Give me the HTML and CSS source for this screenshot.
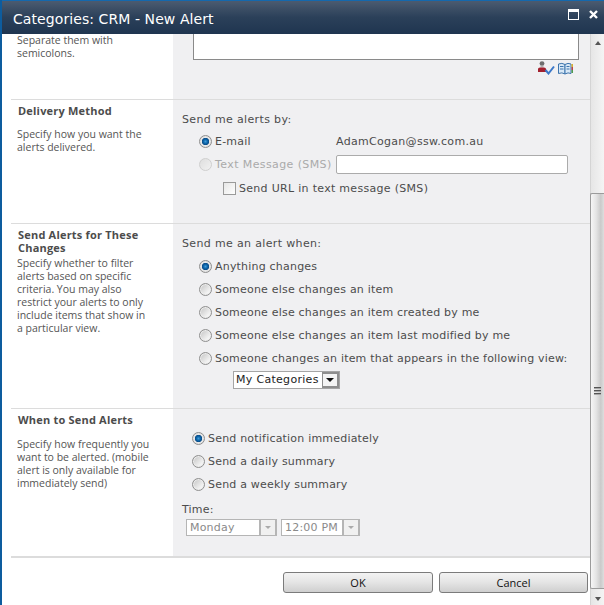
FILE: index.html
```html
<!DOCTYPE html>
<html lang="en">
  <head>
    <meta charset="utf-8">
    <title>Categories: CRM - New Alert</title>
    <link rel="stylesheet" href="styles.css">
  </head>
  <body>
    <div class="dialog">
      <div class="titlebar">
        <span class="title">Categories: CRM - New Alert</span>
        <span class="winbtns">
          <svg width="11" height="11" viewBox="0 0 11 11"><rect x="0.5" y="0.5" width="10" height="10" fill="none" stroke="#fff"/><rect x="1" y="1" width="9" height="2" fill="#fff"/></svg>
          <svg width="9" height="9" viewBox="0 0 9 9"><path d="M1 1l7 7M8 1l-7 7" stroke="#fff" stroke-width="2.4" fill="none"/></svg>
        </span>
      </div>
      <div class="main">
        <div class="content">

          <div class="section sec-users">
            <div class="left">
              <p class="desc">Separate them with semicolons.</p>
            </div>
            <div class="right">
              <div class="addressbox"></div>
              <div class="picker">
                <svg width="17" height="14" viewBox="0 0 17 14">
                  <circle cx="4" cy="2.600" r="2.400" fill="#6e6e6e"/>
                  <rect x="2.500" y="4.500" width="3" height="2" fill="#b5b5b5"/>
                  <path d="M0 11v-3q0-1.500 2-1.500h4q2 0 2 1.500v3z" fill="#a3202e"/>
                  <path d="M7.500 9l3 3.500 5.500-7" stroke="#3b78c9" stroke-width="2" fill="none"/>
                </svg>
                <svg width="15" height="13" viewBox="0 0 15 13">
                  <path d="M0.500 2q3.500-1.500 6.500 0.500v9.500q-3-2-6.500-0.500z" fill="#d8e8f6" stroke="#3d74ad"/>
                  <path d="M7 2.500q3-2 6-0.500v9.500q-3-1.500-6 0.500z" fill="#d8e8f6" stroke="#3d74ad"/>
                  <path d="M2 4.500h3.500M2 7h3.500M8.500 4.500h3M8.500 7h3" stroke="#3d74ad" fill="none"/>
                  <rect x="13.500" y="2" width="1.500" height="3" fill="#d9b02c"/>
                  <rect x="13.500" y="5" width="1.500" height="3" fill="#b8434a"/>
                  <rect x="13.500" y="8" width="1.500" height="3" fill="#4f9a4a"/>
                </svg>
              </div>
            </div>
          </div>

          <div class="section sec-delivery">
            <div class="left">
              <h3>Delivery Method</h3>
              <p class="desc spaced">Specify how you want the alerts delivered.</p>
            </div>
            <div class="right">
              <div class="lead">Send me alerts by:</div>
              <div class="opts indent1">
                <label class="opt"><input type="radio" name="by" checked><span class="optname">E-mail</span><span class="addr">AdamCogan@ssw.com.au</span></label>
                <label class="opt off"><input type="radio" name="by" disabled><span class="optname">Text Message (SMS)</span><span class="smsbox"></span></label>
                <label class="opt chk"><input type="checkbox"><span>Send URL in text message (SMS)</span></label>
              </div>
            </div>
          </div>

          <div class="section sec-changes">
            <div class="left">
              <h3>Send Alerts for These Changes</h3>
              <p class="desc">Specify whether to filter alerts based on specific criteria. You may also restrict your alerts to only include items that show in a particular view.</p>
            </div>
            <div class="right">
              <div class="lead">Send me an alert when:</div>
              <div class="opts indent1">
                <label class="opt"><input type="radio" name="when" checked><span>Anything changes</span></label>
                <label class="opt"><input type="radio" name="when"><span>Someone else changes an item</span></label>
                <label class="opt"><input type="radio" name="when"><span>Someone else changes an item created by me</span></label>
                <label class="opt"><input type="radio" name="when"><span>Someone else changes an item last modified by me</span></label>
                <label class="opt"><input type="radio" name="when"><span>Someone changes an item that appears in the following view:</span></label>
              </div>
              <div class="viewselect">
                <span class="viewname">My Categories</span>
                <span class="viewarrow"><i></i></span>
              </div>
            </div>
          </div>

          <div class="section sec-when">
            <div class="left">
              <h3>When to Send Alerts</h3>
              <p class="desc spaced">Specify how frequently you want to be alerted. (mobile alert is only available for immediately send)</p>
            </div>
            <div class="right">
              <div class="opts indent2">
                <label class="opt"><input type="radio" name="freq" checked><span>Send notification immediately</span></label>
                <label class="opt"><input type="radio" name="freq"><span>Send a daily summary</span></label>
                <label class="opt"><input type="radio" name="freq"><span>Send a weekly summary</span></label>
              </div>
              <div class="timelabel">Time:</div>
              <div class="timerow">
                <div class="dis-select day"><span>Monday</span><b><i></i></b></div>
                <div class="dis-select hour"><span>12:00 PM</span><b><i></i></b></div>
              </div>
            </div>
          </div>

          <div class="buttons">
            <button class="btn ok" type="button">OK</button>
            <button class="btn" type="button">Cancel</button>
          </div>
        </div>

        <div class="scrollbar">
          <span class="arrow up"></span>
          <div class="track">
            <div class="thumb"><span class="grip"></span></div>
          </div>
          <span class="arrow down"></span>
        </div>
      </div>
    </div>
  </body>
</html>
```

FILE: styles.css
```css
* {margin: 0; padding: 0; box-sizing: border-box;}

html, body {
	width: 604px;
	height: 605px;
	overflow: hidden;
	background: #fff;
}
body {
	font: 11px "DejaVu Sans", Verdana, sans-serif;
	color: #4c4c4c;
}

.dialog {
	display: flex;
	flex-direction: column;
	height: 605px;
	border-left: 2px solid #0d5c9e;
}

/* title bar */
.titlebar {
	display: flex;
	justify-content: space-between;
	align-items: center;
	height: 34px;
	padding: 0 6px 0 11px;
	border-top: 1px solid #1468ad;
	background: linear-gradient(#4b5b70, #2b4059 50%, #1f3550);
	color: #fff;
}
.title {font-size: 14px; letter-spacing: 0.08px; position: relative; top: 1px;}
.winbtns {display: flex; align-items: center; gap: 10px; margin-bottom: 7px;}

.main {display: flex; flex: 1; min-height: 0;}
.content {flex: 1; padding-left: 9px;}

/* sections */
.section {
	display: grid;
	grid-template-columns: 162px 1fr;
	border-bottom: 1px solid #dcdcdc;
}
.sec-users {height: 66px;}
.sec-delivery {height: 124px;}
.sec-changes {height: 185px;}
.sec-when {height: 149px; border-bottom: 2px solid #dcdcdc;}

.left {padding: 4px 0 0 6px; font-family: "Open Sans", sans-serif; line-height: 13px; color: #555;}
.right {background: #f0f0f2; padding-left: 9px; letter-spacing: 0.2px;}

h3 {
	font: bold 11px/13px "Open Sans", sans-serif;
	letter-spacing: 0.2px;
	color: #4c4c4c;
	padding: 0 10px 0 1px;
}
.desc {font-size: 10.500px; width: 135px;}
.spaced {margin-top: 11px;}
.sec-users .left {padding-top: 0;}
.sec-when .spaced {margin-top: 12px;}
.sec-changes .desc {margin-top: 3px;}

.lead {height: 14px; line-height: 14px; letter-spacing: 0.35px;}
.sec-delivery .right {padding-top: 13px;}
.sec-changes .right {padding-top: 13px;}
.sec-when .right {padding-top: 18px;}

/* options */
.opts {display: flex; flex-direction: column; margin-top: 3px;}
.sec-changes .opts {margin-top: 4px;}
.indent1 {padding-left: 17px;}
.sec-when .indent2 {padding-left: 10px; margin-top: 0;}
.opt {display: flex; align-items: center; height: 23px;}
.opt input[type=radio] {
	appearance: none;
	width: 13px;
	height: 13px;
	margin-right: 3px;
	border-radius: 50%;
	border: 1px solid #8f8f8f;
	background: linear-gradient(135deg, #c2c2c2, #f7f7f7 80%);
	box-shadow: inset 0 0 0 1px #ececec;
	flex: none;
}
.opt input[type=radio]:checked {
	background: radial-gradient(circle, #3f9ad8 0, #0d66aa 2px, #0a4c88 3.400px, #e8e8e8 4px, #d8d8d8 100%);
	box-shadow: none;
}
.opt input[type=radio]:disabled {
	border-color: #cfcfcf;
	background: linear-gradient(135deg, #dedede, #f2f2f2);
	box-shadow: none;
}
.off {color: #aaa; letter-spacing: 0.4px;}
.optname {width: 121px; flex: none;}
.addr {letter-spacing: 0.3px;}
.smsbox {
	width: 232px;
	height: 19px;
	border: 1px solid #ababab;
	border-radius: 2px;
	background: #fff;
}
.chk {padding-left: 24px; margin-top: 1px; letter-spacing: 0.3px;}
.chk input {
	appearance: none;
	width: 13px;
	height: 13px;
	margin-right: 3px;
	border: 1px solid #9a9a9a;
	background: linear-gradient(135deg, #e6e6e6, #fff);
}

/* top box, cut off by the scroll */
.addressbox {
	width: 386px;
	height: 26px;
	margin-left: 11px;
	background: #fff;
	border: 1px solid #8a8a8a;
	border-top: none;
}
.picker {display: flex; justify-content: flex-end; align-items: center; gap: 3px; padding: 1px 17px 0 0;}

/* selects */
.viewselect {
	display: flex;
	width: 107px;
	height: 18px;
	margin: 1px 0 0 51px;
	border: 1px solid #a5a5a5;
	background: #fff;
	color: #222;
}
.viewname {flex: 1; padding-left: 2px; line-height: 16px; letter-spacing: 0.3px;}
.viewarrow {
	display: flex;
	align-items: center;
	justify-content: center;
	width: 17px;
	border: 2px solid #8e8e8e;
	border-left: 1px solid #8e8e8e;
	background: #f4f4f4;
}
.viewarrow i {border: 4px solid transparent; border-top: 4px solid #111; margin-top: 4px;}

.timelabel {height: 14px; line-height: 14px; margin-top: 7px;}
.timerow {display: flex; gap: 4px; margin: 2px 0 0 4px;}
.dis-select {
	display: flex;
	height: 17px;
	border: 1px solid #b5b5b5;
	background: #fff;
	color: #8a8a8a;
	line-height: 15px;
}
.dis-select span {flex: 1; padding-left: 3px;}
.dis-select b {
	display: flex;
	align-items: center;
	justify-content: center;
	width: 17px;
	border-left: 2px solid #b5b5b5;
	border-right: 1px solid #b5b5b5;
	background: #f0f0f0;
}
.dis-select i {border: 3px solid transparent; border-top: 3px solid #aaa; margin-top: 3px;}
.day {width: 91px;}
.hour {width: 79px;}

/* buttons */
.buttons {display: flex; justify-content: flex-end; gap: 6px; padding: 14px 2px 0 0;}
.btn {
	width: 149px;
	height: 21px;
	border: 1px solid #7b7b7b;
	border-radius: 3px;
	background: linear-gradient(#f3f3f3, #e6e6e6 45%, #cfcfcf);
	font: 11px "Open Sans", sans-serif;
	color: #111;
}
.ok {width: 150px;}

/* scrollbar */
.scrollbar {
	display: flex;
	flex-direction: column;
	width: 14px;
	border-left: 1px solid #d4d4d4;
	background: linear-gradient(90deg, #e6e6e6, #f4f4f4);
}
.arrow {display: block; height: 0; width: 0; border: 3px solid transparent;}
.up {border-top: none; border-bottom: 4px solid #555; margin: 7px auto 0;}
.down {border-bottom: none; border-top: 4px solid #555; margin: 3px auto 4px;}
.track {flex: 1; padding-top: 148px;}
.thumb {
	display: flex;
	align-items: center;
	justify-content: center;
	height: 396px;
	margin-left: -1px;
	border: 1px solid #9b9b9b;
	border-right: none;
	border-radius: 2px 0 0 2px;
	background: linear-gradient(90deg, #f6f6f6, #e4e4e4 40%, #cacaca 75%, #dedede);
}
.grip {
	display: block;
	width: 7px;
	height: 8px;
	background: repeating-linear-gradient(#555 0, #555 1px, #a8a8a8 1px, #a8a8a8 2px, transparent 2px, transparent 3px);
}
```
